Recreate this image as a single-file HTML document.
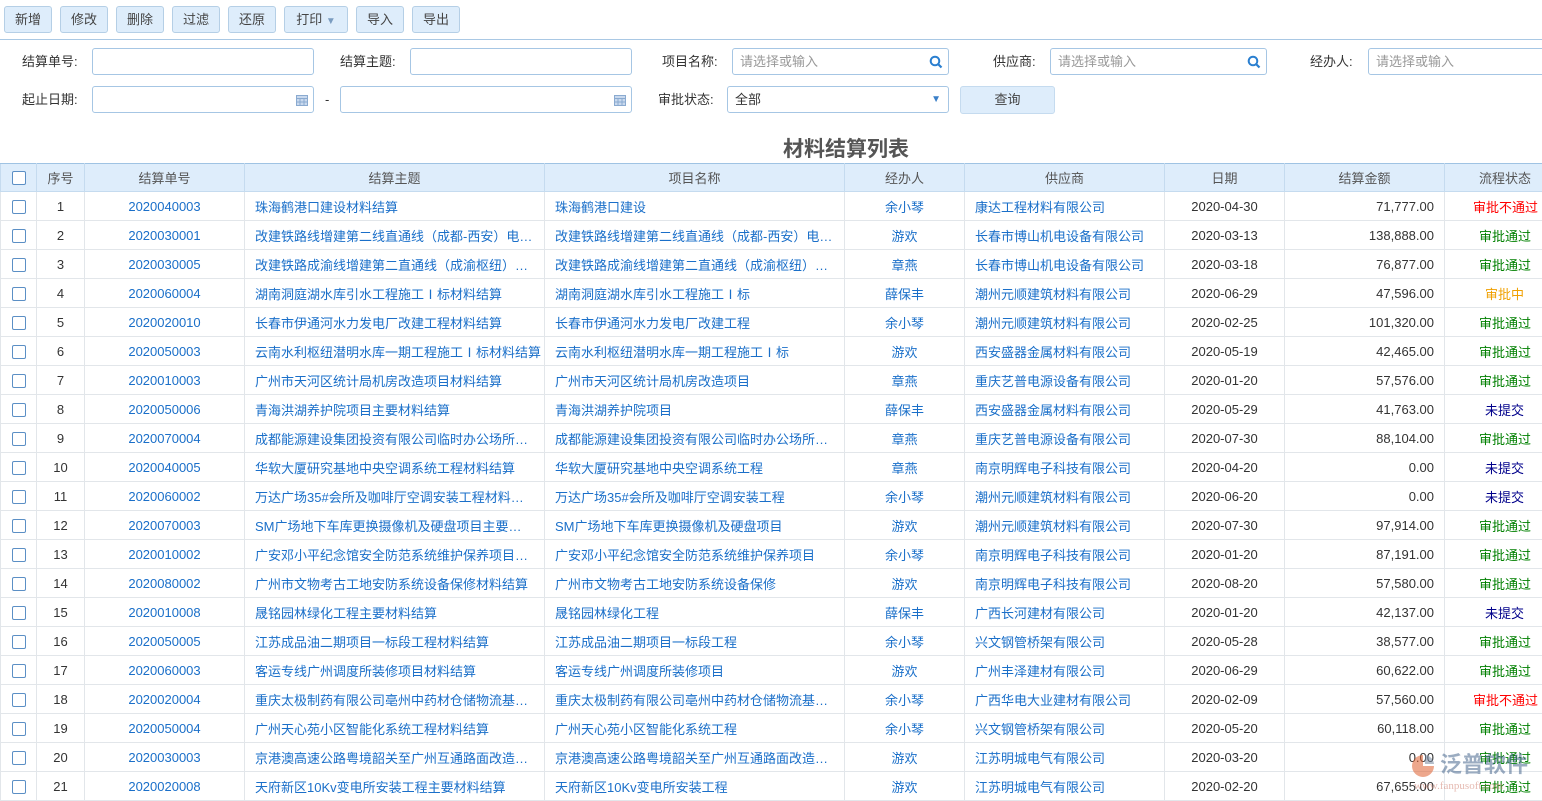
<!DOCTYPE html>
<html><head><meta charset="utf-8"><style>
*{box-sizing:border-box;margin:0;padding:0}
body{width:1542px;height:797px;overflow:hidden;background:#fff;font-family:"Liberation Sans","Noto Sans CJK SC",sans-serif;font-size:13px;color:#333;position:relative}
.btn{position:absolute;top:6px;height:27px;border:1px solid #b5cfe6;border-radius:3px;background:#deedfb;color:#444;font-size:13px;line-height:25px;text-align:center}
.tb{position:absolute;left:0;top:39px;width:1542px;height:1px;background:#a9c8e4}
.lb{position:absolute;font-size:13px;color:#333;line-height:27px}
.in{position:absolute;height:27px;border:1px solid #a6c6e4;border-radius:3px;background:#fff;font-size:13px;color:#999;line-height:25px;padding-left:7px}
.ic{position:absolute;right:5px;top:6px}
table{position:absolute;left:0;top:163px;border-collapse:collapse;table-layout:fixed;width:1560px}
td,th{height:29px;border:1px solid #e2e6ea;white-space:nowrap;overflow:hidden;text-overflow:ellipsis;font-size:13px;font-weight:normal}
th{height:28px;background:#deedfb;color:#555;border-color:#c5dbef;border-top:1px solid #9fc3e3}
td{text-align:center}
.l{text-align:left;padding-left:10px}
.r{text-align:right;padding-right:10px}
.b{color:#1a6fc9}
.cb{display:inline-block;width:14px;height:14px;border:1px solid #5b8fc5;border-radius:2px;background:#fff;vertical-align:middle}
.g{color:#008000}.rd{color:#f00}.o{color:#f0a000}.n{color:#00008b}
</style></head><body>
<div class="btn" style="left:4px;width:48px">新增</div>
<div class="btn" style="left:60px;width:48px">修改</div>
<div class="btn" style="left:116px;width:48px">删除</div>
<div class="btn" style="left:172px;width:48px">过滤</div>
<div class="btn" style="left:228px;width:48px">还原</div>
<div class="btn" style="left:284px;width:64px">打印 <span style="color:#7a9cc0;font-size:10px">▼</span></div>
<div class="btn" style="left:356px;width:48px">导入</div>
<div class="btn" style="left:412px;width:48px">导出</div>
<div class="tb"></div>

<div class="lb" style="left:22px;top:48px">结算单号:</div>
<div class="in" style="left:92px;top:48px;width:222px"></div>
<div class="lb" style="left:340px;top:48px">结算主题:</div>
<div class="in" style="left:410px;top:48px;width:222px"></div>
<div class="lb" style="left:662px;top:48px">项目名称:</div>
<div class="in" style="left:732px;top:48px;width:217px">请选择或输入<svg class="ic" width="14" height="14" viewBox="0 0 14 14"><circle cx="6" cy="6" r="4.3" fill="none" stroke="#2a7fd0" stroke-width="2"/><path d="M9 9l3.5 3.5" stroke="#2a7fd0" stroke-width="2.2"/></svg></div>
<div class="lb" style="left:993px;top:48px">供应商:</div>
<div class="in" style="left:1050px;top:48px;width:217px">请选择或输入<svg class="ic" width="14" height="14" viewBox="0 0 14 14"><circle cx="6" cy="6" r="4.3" fill="none" stroke="#2a7fd0" stroke-width="2"/><path d="M9 9l3.5 3.5" stroke="#2a7fd0" stroke-width="2.2"/></svg></div>
<div class="lb" style="left:1310px;top:48px">经办人:</div>
<div class="in" style="left:1368px;top:48px;width:190px">请选择或输入</div>

<div class="lb" style="left:22px;top:86px">起止日期:</div>
<div class="in" style="left:92px;top:86px;width:222px"><svg class="ic" style="top:7px" width="12" height="12" viewBox="0 0 12 12"><rect x="0.5" y="1.5" width="11" height="10" fill="#c9d9ee" stroke="#8aaad0"/><path d="M0.5 4.5h11M4 4.5v7M8 4.5v7M0.5 8h11" stroke="#8aaad0"/></svg></div>
<div class="lb" style="left:325px;top:86px">-</div>
<div class="in" style="left:340px;top:86px;width:292px"><svg class="ic" style="top:7px" width="12" height="12" viewBox="0 0 12 12"><rect x="0.5" y="1.5" width="11" height="10" fill="#c9d9ee" stroke="#8aaad0"/><path d="M0.5 4.5h11M4 4.5v7M8 4.5v7M0.5 8h11" stroke="#8aaad0"/></svg></div>
<div class="lb" style="left:658px;top:86px">审批状态:</div>
<div class="in" style="left:727px;top:86px;width:222px;color:#333">全部<span style="position:absolute;right:7px;top:0;color:#3a7fc8;font-size:10px">▼</span></div>
<div class="btn" style="left:960px;top:86px;width:95px;height:28px;line-height:26px;border-color:#c5dbef">查询</div>

<div style="position:absolute;left:783px;top:133px;font-size:21px;font-weight:bold;color:#555;white-space:nowrap">材料结算列表</div>

<table>
<colgroup><col style="width:36px"><col style="width:48px"><col style="width:160px"><col style="width:300px"><col style="width:300px"><col style="width:120px"><col style="width:200px"><col style="width:120px"><col style="width:160px"><col style="width:116px"></colgroup>
<tr><th><span class="cb"></span></th><th>序号</th><th>结算单号</th><th>结算主题</th><th>项目名称</th><th>经办人</th><th>供应商</th><th>日期</th><th>结算金额</th><th style="text-align:left;padding-left:34px">流程状态</th></tr>
<tr><td><span class="cb"></span></td><td>1</td><td class="b">2020040003</td><td class="l b">珠海鹤港口建设材料结算</td><td class="l b">珠海鹤港口建设</td><td class="b">余小琴</td><td class="l b">康达工程材料有限公司</td><td>2020-04-30</td><td class="r">71,777.00</td><td class="l rd" style="padding-left:28px">审批不通过</td></tr>
<tr><td><span class="cb"></span></td><td>2</td><td class="b">2020030001</td><td class="l b">改建铁路线增建第二线直通线（成都-西安）电…</td><td class="l b">改建铁路线增建第二线直通线（成都-西安）电…</td><td class="b">游欢</td><td class="l b">长春市博山机电设备有限公司</td><td>2020-03-13</td><td class="r">138,888.00</td><td class="l g" style="padding-left:34px">审批通过</td></tr>
<tr><td><span class="cb"></span></td><td>3</td><td class="b">2020030005</td><td class="l b">改建铁路成渝线增建第二直通线（成渝枢纽）…</td><td class="l b">改建铁路成渝线增建第二直通线（成渝枢纽）…</td><td class="b">章燕</td><td class="l b">长春市博山机电设备有限公司</td><td>2020-03-18</td><td class="r">76,877.00</td><td class="l g" style="padding-left:34px">审批通过</td></tr>
<tr><td><span class="cb"></span></td><td>4</td><td class="b">2020060004</td><td class="l b">湖南洞庭湖水库引水工程施工Ⅰ标材料结算</td><td class="l b">湖南洞庭湖水库引水工程施工Ⅰ标</td><td class="b">薛保丰</td><td class="l b">潮州元顺建筑材料有限公司</td><td>2020-06-29</td><td class="r">47,596.00</td><td class="l o" style="padding-left:40px">审批中</td></tr>
<tr><td><span class="cb"></span></td><td>5</td><td class="b">2020020010</td><td class="l b">长春市伊通河水力发电厂改建工程材料结算</td><td class="l b">长春市伊通河水力发电厂改建工程</td><td class="b">余小琴</td><td class="l b">潮州元顺建筑材料有限公司</td><td>2020-02-25</td><td class="r">101,320.00</td><td class="l g" style="padding-left:34px">审批通过</td></tr>
<tr><td><span class="cb"></span></td><td>6</td><td class="b">2020050003</td><td class="l b">云南水利枢纽潜明水库一期工程施工Ⅰ标材料结算</td><td class="l b">云南水利枢纽潜明水库一期工程施工Ⅰ标</td><td class="b">游欢</td><td class="l b">西安盛器金属材料有限公司</td><td>2020-05-19</td><td class="r">42,465.00</td><td class="l g" style="padding-left:34px">审批通过</td></tr>
<tr><td><span class="cb"></span></td><td>7</td><td class="b">2020010003</td><td class="l b">广州市天河区统计局机房改造项目材料结算</td><td class="l b">广州市天河区统计局机房改造项目</td><td class="b">章燕</td><td class="l b">重庆艺普电源设备有限公司</td><td>2020-01-20</td><td class="r">57,576.00</td><td class="l g" style="padding-left:34px">审批通过</td></tr>
<tr><td><span class="cb"></span></td><td>8</td><td class="b">2020050006</td><td class="l b">青海洪湖养护院项目主要材料结算</td><td class="l b">青海洪湖养护院项目</td><td class="b">薛保丰</td><td class="l b">西安盛器金属材料有限公司</td><td>2020-05-29</td><td class="r">41,763.00</td><td class="l n" style="padding-left:40px">未提交</td></tr>
<tr><td><span class="cb"></span></td><td>9</td><td class="b">2020070004</td><td class="l b">成都能源建设集团投资有限公司临时办公场所…</td><td class="l b">成都能源建设集团投资有限公司临时办公场所…</td><td class="b">章燕</td><td class="l b">重庆艺普电源设备有限公司</td><td>2020-07-30</td><td class="r">88,104.00</td><td class="l g" style="padding-left:34px">审批通过</td></tr>
<tr><td><span class="cb"></span></td><td>10</td><td class="b">2020040005</td><td class="l b">华软大厦研究基地中央空调系统工程材料结算</td><td class="l b">华软大厦研究基地中央空调系统工程</td><td class="b">章燕</td><td class="l b">南京明辉电子科技有限公司</td><td>2020-04-20</td><td class="r">0.00</td><td class="l n" style="padding-left:40px">未提交</td></tr>
<tr><td><span class="cb"></span></td><td>11</td><td class="b">2020060002</td><td class="l b">万达广场35#会所及咖啡厅空调安装工程材料…</td><td class="l b">万达广场35#会所及咖啡厅空调安装工程</td><td class="b">余小琴</td><td class="l b">潮州元顺建筑材料有限公司</td><td>2020-06-20</td><td class="r">0.00</td><td class="l n" style="padding-left:40px">未提交</td></tr>
<tr><td><span class="cb"></span></td><td>12</td><td class="b">2020070003</td><td class="l b">SM广场地下车库更换摄像机及硬盘项目主要…</td><td class="l b">SM广场地下车库更换摄像机及硬盘项目</td><td class="b">游欢</td><td class="l b">潮州元顺建筑材料有限公司</td><td>2020-07-30</td><td class="r">97,914.00</td><td class="l g" style="padding-left:34px">审批通过</td></tr>
<tr><td><span class="cb"></span></td><td>13</td><td class="b">2020010002</td><td class="l b">广安邓小平纪念馆安全防范系统维护保养项目…</td><td class="l b">广安邓小平纪念馆安全防范系统维护保养项目</td><td class="b">余小琴</td><td class="l b">南京明辉电子科技有限公司</td><td>2020-01-20</td><td class="r">87,191.00</td><td class="l g" style="padding-left:34px">审批通过</td></tr>
<tr><td><span class="cb"></span></td><td>14</td><td class="b">2020080002</td><td class="l b">广州市文物考古工地安防系统设备保修材料结算</td><td class="l b">广州市文物考古工地安防系统设备保修</td><td class="b">游欢</td><td class="l b">南京明辉电子科技有限公司</td><td>2020-08-20</td><td class="r">57,580.00</td><td class="l g" style="padding-left:34px">审批通过</td></tr>
<tr><td><span class="cb"></span></td><td>15</td><td class="b">2020010008</td><td class="l b">晟铭园林绿化工程主要材料结算</td><td class="l b">晟铭园林绿化工程</td><td class="b">薛保丰</td><td class="l b">广西长河建材有限公司</td><td>2020-01-20</td><td class="r">42,137.00</td><td class="l n" style="padding-left:40px">未提交</td></tr>
<tr><td><span class="cb"></span></td><td>16</td><td class="b">2020050005</td><td class="l b">江苏成品油二期项目一标段工程材料结算</td><td class="l b">江苏成品油二期项目一标段工程</td><td class="b">余小琴</td><td class="l b">兴文钢管桥架有限公司</td><td>2020-05-28</td><td class="r">38,577.00</td><td class="l g" style="padding-left:34px">审批通过</td></tr>
<tr><td><span class="cb"></span></td><td>17</td><td class="b">2020060003</td><td class="l b">客运专线广州调度所装修项目材料结算</td><td class="l b">客运专线广州调度所装修项目</td><td class="b">游欢</td><td class="l b">广州丰泽建材有限公司</td><td>2020-06-29</td><td class="r">60,622.00</td><td class="l g" style="padding-left:34px">审批通过</td></tr>
<tr><td><span class="cb"></span></td><td>18</td><td class="b">2020020004</td><td class="l b">重庆太极制药有限公司亳州中药材仓储物流基…</td><td class="l b">重庆太极制药有限公司亳州中药材仓储物流基…</td><td class="b">余小琴</td><td class="l b">广西华电大业建材有限公司</td><td>2020-02-09</td><td class="r">57,560.00</td><td class="l rd" style="padding-left:28px">审批不通过</td></tr>
<tr><td><span class="cb"></span></td><td>19</td><td class="b">2020050004</td><td class="l b">广州天心苑小区智能化系统工程材料结算</td><td class="l b">广州天心苑小区智能化系统工程</td><td class="b">余小琴</td><td class="l b">兴文钢管桥架有限公司</td><td>2020-05-20</td><td class="r">60,118.00</td><td class="l g" style="padding-left:34px">审批通过</td></tr>
<tr><td><span class="cb"></span></td><td>20</td><td class="b">2020030003</td><td class="l b">京港澳高速公路粤境韶关至广州互通路面改造…</td><td class="l b">京港澳高速公路粤境韶关至广州互通路面改造…</td><td class="b">游欢</td><td class="l b">江苏明城电气有限公司</td><td>2020-03-20</td><td class="r">0.00</td><td class="l g" style="padding-left:34px">审批通过</td></tr>
<tr><td><span class="cb"></span></td><td>21</td><td class="b">2020020008</td><td class="l b">天府新区10Kv变电所安装工程主要材料结算</td><td class="l b">天府新区10Kv变电所安装工程</td><td class="b">游欢</td><td class="l b">江苏明城电气有限公司</td><td>2020-02-20</td><td class="r">67,655.00</td><td class="l g" style="padding-left:34px">审批通过</td></tr>
</table>
<div style="position:absolute;left:1410px;top:750px;width:132px;height:46px;opacity:.55;pointer-events:none;white-space:nowrap">
<svg style="position:absolute;left:0;top:4px" width="26" height="24" viewBox="0 0 26 24"><path d="M13 1a11 11 0 1 0 11 11H13z" fill="#e06030"/><path d="M15 1v9h9A10 10 0 0 0 15 1z" fill="#7a8aa0"/></svg>
<div style="position:absolute;left:30px;top:0;font-size:22px;font-weight:bold;color:#4a6a90;line-height:30px">泛普软件</div>
<div style="position:absolute;left:4px;top:30px;font-size:11px;color:#d08070;font-family:'Liberation Serif',serif">www.fanpusoft.com</div>
</div>
</body></html>
